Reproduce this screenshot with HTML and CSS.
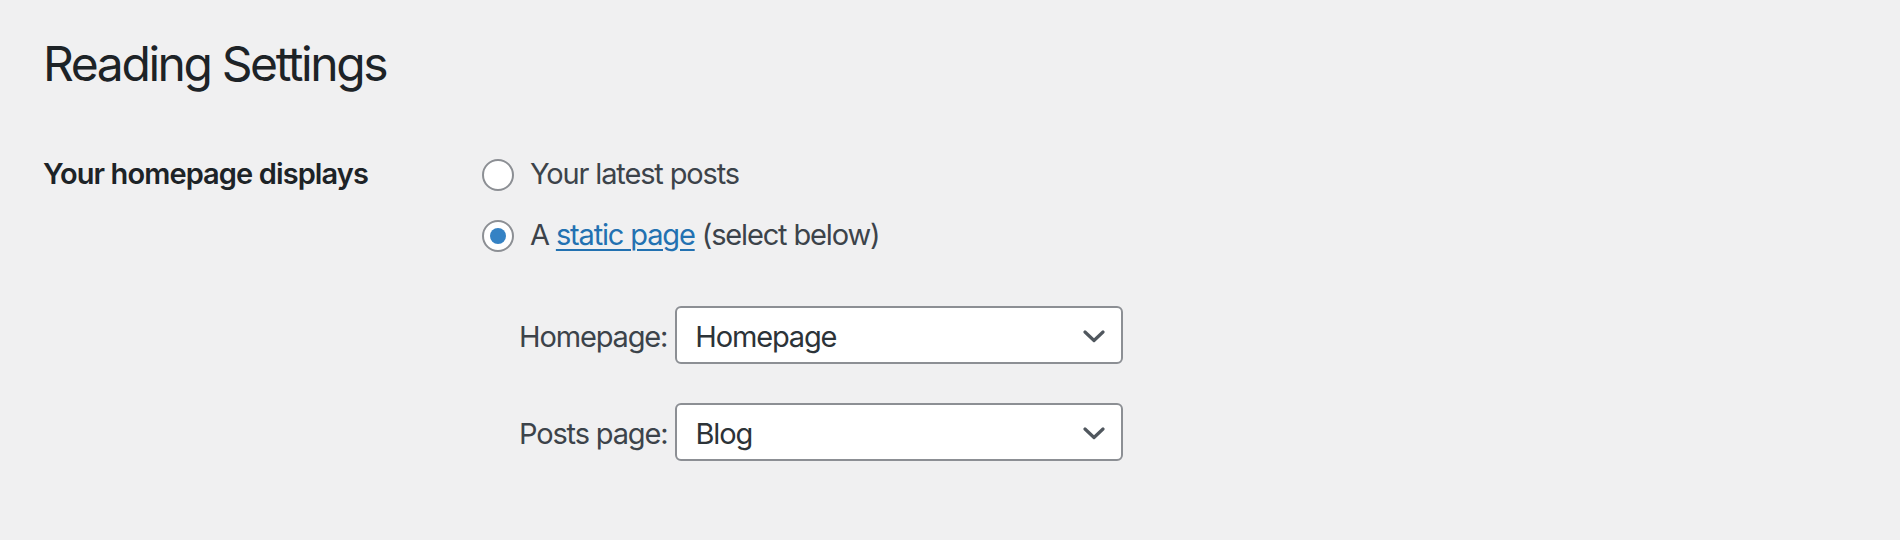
FILE: index.html
```html
<!DOCTYPE html>
<html lang="en">
<head>
<meta charset="utf-8">
<title>Reading Settings</title>
<link rel="stylesheet" href="styles.css">
</head>
<body>
<div class="wrap">
  <h1 class="page-title">Reading Settings</h1>
  <div class="form-table">
    <div class="row-label">Your homepage displays</div>
    <div class="row-field">
      <label class="radio-row">
        <span class="radio"></span>
        <span class="radio-text">Your latest posts</span>
      </label>
      <label class="radio-row second">
        <span class="radio checked"><span class="dot"></span></span>
        <span class="radio-text">A <a class="link" href="#">static page</a> (select below)</span>
      </label>
      <div class="page-selects">
        <div class="select-row">
          <span class="select-label">Homepage:</span>
          <span class="select-box">
            <span class="select-value">Homepage</span>
            <svg class="chevron" width="22" height="13" viewBox="0 0 22 13"><path d="M2 2 L11 10.5 L20 2" fill="none" stroke="#50575e" stroke-width="3.2" stroke-linecap="round" stroke-linejoin="round"/></svg>
          </span>
        </div>
        <div class="select-row">
          <span class="select-label">Posts page:</span>
          <span class="select-box">
            <span class="select-value">Blog</span>
            <svg class="chevron" width="22" height="13" viewBox="0 0 22 13"><path d="M2 2 L11 10.5 L20 2" fill="none" stroke="#50575e" stroke-width="3.2" stroke-linecap="round" stroke-linejoin="round"/></svg>
          </span>
        </div>
      </div>
    </div>
  </div>
</div>
</body>
</html>
```
FILE: styles.css
```css
html, body {
  margin: 0;
  padding: 0;
}
body {
  background: #f0f0f1;
  font-family: Inter, "Noto Sans", "Liberation Sans", sans-serif;
  color: #3c434a;
  font-size: 29px;
  line-height: 40px;
  letter-spacing: -1.15px;
}
.wrap {
  padding: 0 43px;
}
.page-title {
  margin: 35px 0 0;
  font-size: 48px;
  line-height: 58px;
  font-weight: 400;
  color: #1d2327;
  letter-spacing: -2.4px;
}
.form-table {
  display: grid;
  grid-template-columns: 439px 1fr;
  margin-top: 61px;
}
.row-label {
  font-weight: 600;
  color: #1d2327;
  letter-spacing: -0.9px;
}
.row-field {
  display: flex;
  flex-direction: column;
}
.radio-row {
  display: flex;
  align-items: flex-start;
  gap: 16px;
}
.radio-row.second {
  margin-top: 21px;
}
.radio {
  box-sizing: border-box;
  width: 32px;
  height: 32px;
  margin-top: 5px;
  border: 2px solid #8c8f94;
  border-radius: 50%;
  background: #fff;
  display: flex;
  align-items: center;
  justify-content: center;
  flex: none;
}
.dot {
  width: 16px;
  height: 16px;
  border-radius: 50%;
  background: #3582c4;
}
.link {
  color: #2271b1;
  text-decoration: underline;
  text-decoration-thickness: 2px;
  text-underline-offset: 4px;
}
.page-selects {
  margin-top: 51px;
  padding-left: 37px;
  display: flex;
  flex-direction: column;
  gap: 39px;
}
.select-row {
  display: flex;
  align-items: center;
  gap: 8px;
}
.select-label {
  color: #3c434a;
  padding-top: 3px;
}
.select-box {
  box-sizing: border-box;
  width: 448px;
  height: 58px;
  border: 2px solid #8c8f94;
  border-radius: 6px;
  background: #fff;
  display: flex;
  align-items: center;
  justify-content: space-between;
  padding: 3px 16px 0 18px;
  color: #2c3338;
}
.chevron {
  display: block;
  margin-top: -1px;
}
```
